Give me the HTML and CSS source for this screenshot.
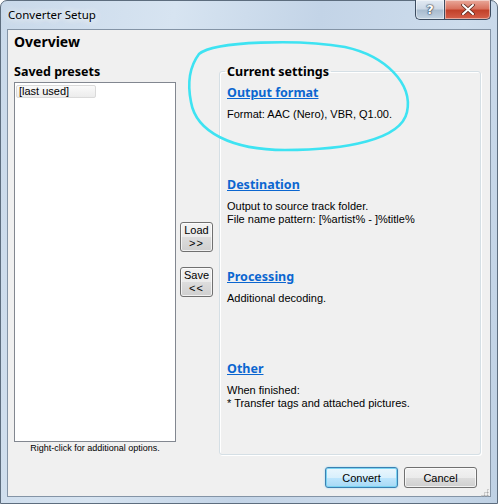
FILE: index.html
```html
<!DOCTYPE html>
<html lang="en">
<head>
    <meta charset="UTF-8">
    <title>Converter Setup</title>
    <link rel="stylesheet" href="styles.css">
</head>
<body>
    <div class="window">
        <div class="titlebar">
            <span class="title">Converter Setup</span>
            <div class="caption-buttons">
                <span class="cap help">?</span>
                <span class="cap close">
                    <svg width="14" height="11" viewBox="0 0 14 11">
                        <path d="M2 1 L12 10 M12 1 L2 10" stroke="#5a2a20" stroke-width="3.6" stroke-linecap="round"/>
                        <path d="M2 1 L12 10 M12 1 L2 10" stroke="#fff" stroke-width="2" stroke-linecap="round"/>
                    </svg>
                </span>
            </div>
        </div>

        <div class="client">
            <h1>Overview</h1>
            <div class="columns">
                <div class="presets">
                    <h2>Saved presets</h2>
                    <div class="listbox">
                        <span class="item">[last used]</span>
                    </div>
                    <p class="hint">Right-click for additional options.</p>
                </div>

                <div class="transfer">
                    <button class="small-btn load">Load<span>&gt;&gt;</span></button>
                    <button class="small-btn">Save<span>&lt;&lt;</span></button>
                </div>

                <fieldset class="settings">
                    <legend>Current settings</legend>
                    <div class="section">
                        <a href="#">Output format</a>
                        <p>Format: AAC (Nero), VBR, Q1.00.</p>
                    </div>
                    <div class="section">
                        <a href="#">Destination</a>
                        <p>Output to source track folder.<br>File name pattern: [%artist% - ]%title%</p>
                    </div>
                    <div class="section">
                        <a href="#">Processing</a>
                        <p>Additional decoding.</p>
                    </div>
                    <div class="section">
                        <a href="#">Other</a>
                        <p>When finished:<br>* Transfer tags and attached pictures.</p>
                    </div>
                </fieldset>
            </div>

            <div class="footer">
                <button class="dlg-btn default">Convert</button>
                <button class="dlg-btn">Cancel</button>
                <span class="grip"></span>
            </div>
        </div>

        <!-- hand-drawn highlight over the output format -->
        <svg class="annotation" width="498" height="504" viewBox="0 0 498 504">
            <path d="M199 54 C214 41, 300 39, 345 47 C386 56, 413 84, 407 112 C401 140, 345 150, 285 150 C232 150, 196 132, 191 102 C187 82, 190 66, 199 54"
                  fill="none" stroke="#3ee3f2" stroke-width="2.6" stroke-linecap="round"/>
        </svg>
    </div>
</body>
</html>
```

FILE: styles.css
```css
body {
    margin: 0;
    background: #fff;
}
.window {
    position: relative;
    width: 498px;
    height: 504px;
    box-sizing: border-box;
    border: 1px solid #5d6d7e;
    border-radius: 7px 7px 0 0;
    padding: 0 6px 6px 6px;
    background: linear-gradient(100deg, #c9d9ea 0%, #d7e4f1 30%, #c3d4e7 55%, #cddcec 80%, #bfd1e4 100%);
    font-family: "Liberation Sans", Arial, sans-serif;
    font-size: 11px;
    color: #000;
}
.titlebar {
    height: 28px;
    display: flex;
    justify-content: space-between;
    align-items: flex-start;
}
.title {
    font-family: "Noto Sans", sans-serif;
    font-size: 11.5px;
    margin: 6px 0 0 1px;
    text-shadow: 0 0 8px #f4f8fc, 0 0 8px #f4f8fc;
}
.caption-buttons {
    display: flex;
    margin-top: -1px;
}
.cap {
    height: 20px;
    box-sizing: border-box;
    border: 1px solid #3c4c60;
    border-top: none;
    display: flex;
    align-items: center;
    justify-content: center;
    box-shadow: inset 0 0 0 1px rgba(255, 255, 255, 0.45);
}
.help {
    width: 29px;
    border-right: none;
    border-radius: 0 0 0 5px;
    background: linear-gradient(#e2eaf3 0%, #cdd9e6 45%, #a9bccf 55%, #c3d3e2 100%);
    font-family: "DejaVu Sans", sans-serif;
    font-weight: bold;
    font-size: 13px;
    color: #fff;
    text-shadow: 0 0 1px #2c3a4c, 0 0 1px #2c3a4c, 0 0 2px #2c3a4c;
}
.close {
    width: 47px;
    border-radius: 0 0 5px 0;
    background: linear-gradient(#e9a99b 0%, #d9735f 45%, #c2412a 55%, #d5604a 100%);
}

.client {
    height: 468px;
    box-sizing: border-box;
    border: 1px solid #8494a6;
    background: #f0f0f0;
    padding: 0 9px 0 6px;
}
h1 {
    margin: 0;
    height: 32px;
    padding-top: 1px;
    box-sizing: border-box;
    font-family: "Noto Sans", sans-serif;
    font-size: 14px;
    font-weight: bold;
    line-height: 21px;
}
.columns {
    display: flex;
    height: 393px;
}
.presets {
    width: 162px;
}
h2 {
    margin: 0;
    height: 20px;
    font-family: "Noto Sans", sans-serif;
    font-size: 12.5px;
    font-weight: bold;
    line-height: 19px;
}
.listbox {
    height: 360px;
    box-sizing: border-box;
    border: 1px solid #828790;
    background: #fff;
    padding: 2px 1px;
}
.item {
    display: block;
    width: 80px;
    height: 13px;
    box-sizing: border-box;
    padding-left: 2px;
    border: 1px solid #dadada;
    border-radius: 2px;
    background: linear-gradient(#fafafa, #ececec);
    font-size: 11px;
    line-height: 11px;
}
.hint {
    margin: 0;
    text-align: center;
    font-size: 9px;
    line-height: 13px;
}

.transfer {
    width: 33px;
    margin: 0 6px 0 4px;
    padding-top: 160px;
    display: flex;
    flex-direction: column;
    gap: 15px;
}
.small-btn {
    width: 33px;
    height: 30px;
    padding: 1px 0 0;
    border: 1px solid #707070;
    border-radius: 3px;
    background: linear-gradient(#f2f2f2 0%, #ebebeb 50%, #dddddd 51%, #cfcfcf 100%);
    box-shadow: inset 0 0 0 1px rgba(255, 255, 255, 0.7);
    font-family: "Liberation Sans", Arial, sans-serif;
    font-size: 11px;
    line-height: 13px;
    color: #000;
    display: flex;
    flex-direction: column;
    align-items: center;
}
.small-btn span {
    letter-spacing: 1px;
}

.settings {
    width: 262px;
    height: 392px;
    box-sizing: border-box;
    margin: 1px 0 0;
    padding: 5px 0 0 7px;
    border: 1px solid #d5dfe5;
    border-radius: 3px;
    box-shadow: inset 1px 1px 0 #fff, 1px 1px 0 #fff;
}
.settings legend {
    padding: 0 2px;
    margin-left: -2px;
    font-family: "Noto Sans", sans-serif;
    font-size: 12.5px;
    font-weight: bold;
    line-height: 17px;
}
.section {
    height: 92px;
}
.section a {
    display: inline-block;
    font-family: "Noto Sans", sans-serif;
    font-size: 12.5px;
    font-weight: bold;
    line-height: 16px;
    color: #0b66d0;
    text-decoration: underline;
}
.section p {
    margin: 7px 0 0;
    line-height: 13px;
}

.footer {
    position: relative;
    display: flex;
    justify-content: flex-end;
    gap: 6px;
    padding: 12px 4px 0 0;
}
.dlg-btn {
    width: 73px;
    height: 21px;
    padding: 0;
    border: 1px solid #707070;
    border-radius: 3px;
    background: linear-gradient(#f2f2f2 0%, #ebebeb 50%, #dddddd 51%, #cfcfcf 100%);
    box-shadow: inset 0 0 0 1px rgba(255, 255, 255, 0.7);
    font-family: "Liberation Sans", Arial, sans-serif;
    font-size: 11px;
    color: #000;
}
.dlg-btn.default {
    border-color: #3c7fb1;
    background: linear-gradient(#eaf6fd 0%, #d9f0fc 50%, #bee6fd 51%, #a7d9f5 100%);
    box-shadow: inset 0 0 0 1px #7ad4f2, 0 0 2px #8ed7f7;
}
.grip {
    position: absolute;
    right: -8px;
    bottom: -9px;
    width: 9px;
    height: 9px;
    background: radial-gradient(circle, #a7a7a7 0.8px, transparent 1.2px) 0 0 / 3px 3px;
    clip-path: polygon(100% 0, 100% 100%, 0 100%);
}

.annotation {
    position: absolute;
    left: -1px;
    top: -1px;
    pointer-events: none;
}
```
